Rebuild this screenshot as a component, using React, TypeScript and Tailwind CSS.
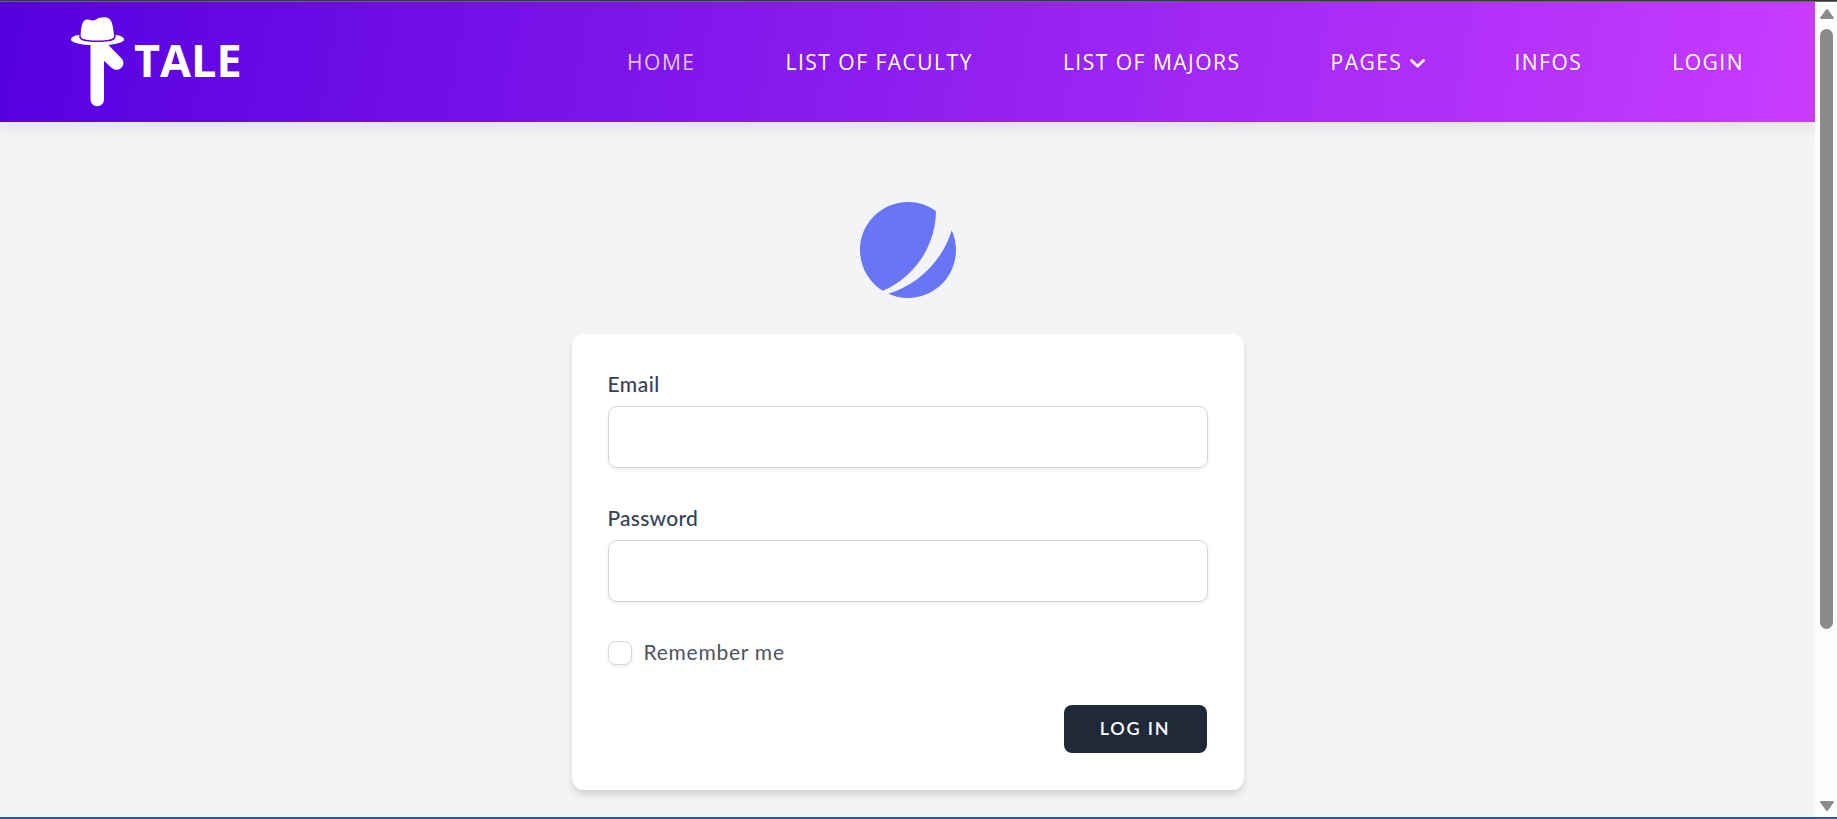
import React from 'react';

const links = ['HOME', 'LIST OF FACULTY', 'LIST OF MAJORS', 'PAGES', 'INFOS', 'LOGIN'];

function Logo() {
  return (
    <a href="#" className="flex w-[170px]">
      <svg className="h-[90px] w-[53px] shrink-0" viewBox="0 0 53 90" fill="#fff">
        <path d="M9.700 19C9.700 12 11 6.500 12.500 4.500C14 2.300 16.500 2.200 18.500 2.800C21 3.800 23.500 3.600 25.500 2.200C28.500 0 35 -.5 38 1.500C41.500 4 42.500 12 43 19C43 20.800 42 21.500 40.500 22C33 24 20 24 12.500 22C10.700 21.500 9.700 20.800 9.700 19Z" />
        <path d="M8.300 17.800C3 18.700 0 20.500 0 22.600C0 26 12 28.500 26.500 28.500C41 28.500 53 26 53 22.600C53 20.500 50 18.700 44.500 17.800C45 20.500 44.200 22 42.500 22.900C36 25.700 17 25.700 10.500 22.900C8.600 22 7.900 20.500 8.300 17.800Z" />
        <path d="M19.500 27H33V82C33 86.500 30 89.200 26.200 89.200S19.500 86.500 19.500 82Z" />
        <path d="M37.500 28L50.800 41.800C56 48 47.500 56.500 40.800 51L31 42V28Z" />
      </svg>
      <span className="ml-[10px] mt-px text-[45px] font-bold leading-[84px] text-white">TALE</span>
    </a>
  );
}

function Field({ label, type, tracking }: { label: string; type: string; tracking: string }) {
  return (
    <label className="block">
      <span className={`block h-[30px] text-[21px] font-medium leading-[28px] text-[#374151] ${tracking}`}>{label}</span>
      <input
        type={type}
        className="mt-[6px] block h-[62px] w-full rounded-[9px] border border-[#d1d5db] bg-white px-4 shadow-[0_2px_4px_rgba(0,0,0,0.07)] outline-none"
      />
    </label>
  );
}

function Scrollbar() {
  return (
    <div className="flex w-[22px] shrink-0 flex-col items-center bg-[#fcfcfc]">
      <svg className="mt-[7px] ml-px h-[10px] w-[14px]" viewBox="0 0 14 10" fill="#8b8b8b">
        <path d="M5.700 1Q7-.8 8.300 1L13.700 8.500Q14.200 10 13 10H1Q-.2 10 .3 8.500Z" />
      </svg>
      <div className="mt-[10px] h-[600px] w-[13px] rounded-full bg-[#8b8b8b]" />
      <svg className="mb-[6px] ml-px mt-auto h-[10px] w-[14px] rotate-180" viewBox="0 0 14 10" fill="#8b8b8b">
        <path d="M5.700 1Q7-.8 8.300 1L13.700 8.500Q14.200 10 13 10H1Q-.2 10 .3 8.500Z" />
      </svg>
    </div>
  );
}

export default function App() {
  return (
    <div className="flex h-[819px] w-[1837px] flex-col overflow-hidden border-b-2 border-[#2f578f] bg-[#f3f4f6]">
      <div className="h-[2px] shrink-0 border-b border-[#6b6468] bg-[#383838]" />
      <div className="flex min-h-0 flex-1">
        <div className="flex w-[1815px] flex-col overflow-hidden">
          <header className="flex h-[120px] shrink-0 items-start justify-between bg-[linear-gradient(100deg,#5500e0,#c83cff)] pl-[71px] pr-[71px] pt-[15px] font-['Open_Sans',sans-serif] shadow-[0_6px_16px_rgba(0,0,0,0.08)]">
            <Logo />
            <nav className="mt-[29px] flex gap-[90px] text-[21px] leading-[32px] tracking-[1.5px] text-white">
              {links.map((link) => (
                <a key={link} href="#" className={link === 'HOME' ? 'text-[#e2c4fa]' : link === 'INFOS' ? '-ml-px' : 'flex items-center'}>
                  {link}
                  {link === 'PAGES' && (
                    <svg className="ml-[8px] mt-[3px] h-[9px] w-[15px]" viewBox="0 0 15 9" fill="none" stroke="currentColor" strokeWidth="2.600" strokeLinecap="round" strokeLinejoin="round">
                      <path d="M1.500 1.500L7.500 7.300L13.500 1.500" />
                    </svg>
                  )}
                </a>
              ))}
            </nav>
          </header>
          <main className="flex flex-col items-center pt-[80px] font-['Lato',sans-serif]">
            <svg className="size-[96px]" viewBox="0 0 48 48" fill="#6875f5">
              <path d="M11.395 44.428C4.557 40.198 0 32.632 0 24 0 10.745 10.745 0 24 0a23.891 23.891 0 0113.997 4.502c-.2 17.907-11.097 33.245-26.602 39.926z" />
              <path d="M14.134 45.885A23.914 23.914 0 0024 48c13.255 0 24-10.745 24-24 0-3.516-.756-6.856-2.115-9.866-4.659 15.143-16.608 27.092-31.750 31.751z" />
            </svg>
            <form className="mt-[36px] flex h-[456px] w-[672px] flex-col rounded-[12px] bg-white p-[36px] shadow-[0_6px_9px_-1px_rgba(0,0,0,0.1),0_3px_6px_-2px_rgba(0,0,0,0.1)]">
              <Field label="Email" type="email" tracking="tracking-[0.5px]" />
              <div className="mt-[36px]">
                <Field label="Password" type="password" tracking="tracking-[0.25px]" />
              </div>
              <label className="mt-[36px] flex h-[30px] items-center text-[21px] text-[#4b5563]">
                <input type="checkbox" className="size-[24px] appearance-none rounded-[8px] border border-[#d1d5db] bg-white shadow-[0_2px_4px_rgba(0,0,0,0.07)]" />
                <span className="-mt-[2px] ml-[12px] tracking-[0.75px]">Remember me</span>
              </label>
              <button type="button" className="mb-px mr-px mt-auto h-[48px] w-[143px] self-end rounded-[8px] bg-[#1f2937] pb-px text-[18px] font-semibold tracking-[1.8px] text-white">
                LOG IN
              </button>
            </form>
          </main>
        </div>
        <Scrollbar />
      </div>
    </div>
  );
}
